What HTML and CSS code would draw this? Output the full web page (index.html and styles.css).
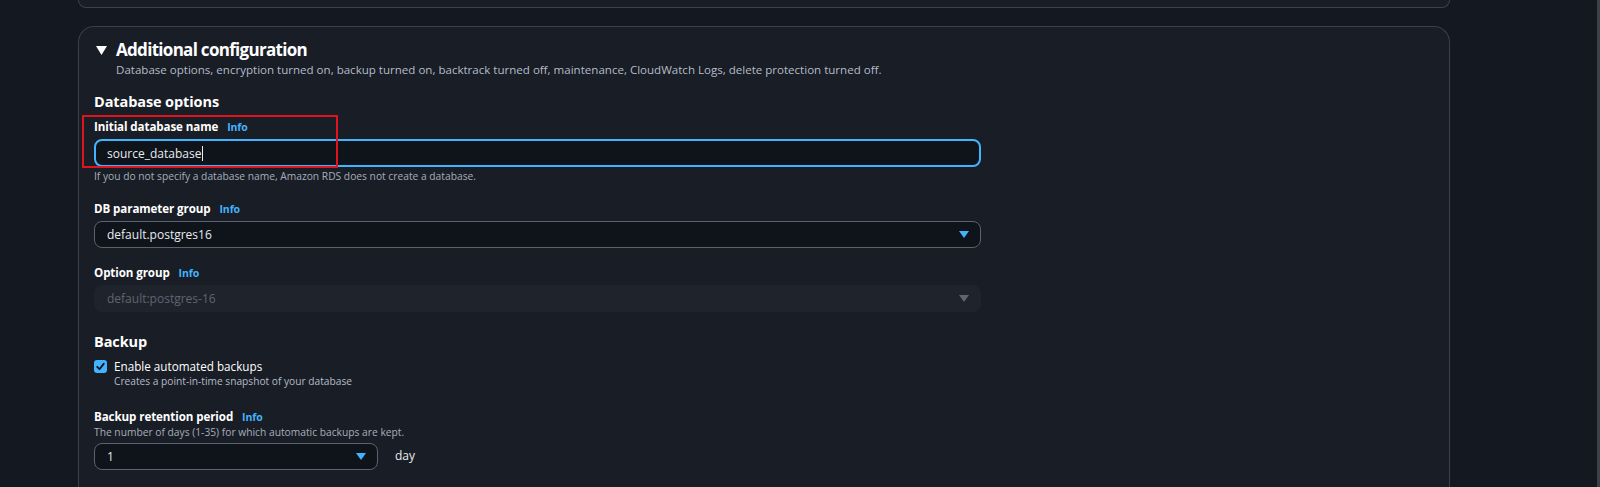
FILE: index.html
```html
<!DOCTYPE html>
<html lang="en">
<head>
<meta charset="utf-8">
<title>Additional configuration</title>
<link rel="stylesheet" href="styles.css">
</head>
<body>
<div class="page">
  <main class="content">
    <div class="card card-prev"></div>
    <section class="card">
      <div class="expander">
        <svg class="caret" width="11" height="9" viewBox="0 0 11 9"><path d="M0 0 H11 L5.5 9 Z" fill="#ffffff"/></svg>
        <div>
          <h2 class="exp-title">Additional configuration</h2>
          <p class="exp-desc">Database options, encryption turned on, backup turned on, backtrack turned off, maintenance, CloudWatch Logs, delete protection turned off.</p>
        </div>
      </div>

      <h3 class="section-title">Database options</h3>

      <div class="field field-first">
        <div class="highlight"></div>
        <label class="label">Initial database name <span class="info">Info</span></label>
        <div class="input input-focus"><span class="value">source_database</span><span class="cursor"></span></div>
        <p class="hint">If you do not specify a database name, Amazon RDS does not create a database.</p>
      </div>

      <div class="field">
        <label class="label">DB parameter group <span class="info">Info</span></label>
        <div class="input select"><span class="value">default.postgres16</span>
          <svg class="arrow" width="10" height="7" viewBox="0 0 10 7"><path d="M0 0 H10 L5 7 Z" fill="#42b4ff"/></svg>
        </div>
      </div>

      <div class="field field-third">
        <label class="label">Option group <span class="info">Info</span></label>
        <div class="input select disabled"><span class="value">default:postgres-16</span>
          <svg class="arrow" width="10" height="7" viewBox="0 0 10 7"><path d="M0 0 H10 L5 7 Z" fill="#5f6570"/></svg>
        </div>
      </div>

      <h3 class="section-title backup-title">Backup</h3>

      <div class="checkbox-row">
        <span class="checkbox">
          <svg width="13" height="13" viewBox="0 0 13 13"><path d="M3.2 6.8 L5.5 9.2 L9.8 3.6" fill="none" stroke="#0f141a" stroke-width="1.8" stroke-linecap="round" stroke-linejoin="round"/></svg>
        </span>
        <div>
          <div class="cb-label">Enable automated backups</div>
          <div class="cb-desc">Creates a point-in-time snapshot of your database</div>
        </div>
      </div>

      <div class="field retention">
        <label class="label">Backup retention period <span class="info">Info</span></label>
        <p class="desc">The number of days (1-35) for which automatic backups are kept.</p>
        <div class="row">
          <div class="input select small"><span class="value">1</span>
            <svg class="arrow" width="10" height="7" viewBox="0 0 10 7"><path d="M0 0 H10 L5 7 Z" fill="#42b4ff"/></svg>
          </div>
          <span class="unit">day</span>
        </div>
      </div>
    </section>
  </main>
  <div class="scrollbar"></div>
</div>
</body>
</html>
```

FILE: styles.css
```css
* { box-sizing: border-box; }
html, body {
  margin: 0;
  padding: 0;
  height: 487px;
  overflow: hidden;
  background: #141820;
  font-family: "Open Sans", "Noto Sans", sans-serif;
  color: #d1d5db;
}
.page {
  display: flex;
  height: 487px;
}
.content {
  flex: 1;
  padding-left: 78px;
}
.scrollbar {
  width: 3px;
  background: #3d4046;
}
.card {
  width: 1372px;
  background: #191d26;
  border: 1px solid #3b404b;
  border-radius: 16px;
}
.card-prev {
  height: 8px;
  border-top: none;
  border-radius: 0 0 16px 16px;
}
section.card {
  margin-top: 18px;
  padding: 13px 15px 0;
  height: 461px;
  overflow: hidden;
  border-bottom: none;
  border-radius: 16px 16px 0 0;
}
.expander {
  display: flex;
  align-items: flex-start;
  gap: 9px;
  padding-left: 2px;
}
.caret { margin-top: 6px; }
.exp-title {
  margin: 0;
  font-size: 17px;
  line-height: 20px;
  font-weight: 700;
  color: #ffffff;
  letter-spacing: -0.7px;
}
.exp-desc {
  margin: 2px 0 0;
  font-size: 11.55px;
  line-height: 16px;
  color: #b4bcc7;
}
.section-title {
  margin: 15px 0 0;
  font-size: 14.5px;
  line-height: 18px;
  font-weight: 700;
  color: #ffffff;
  letter-spacing: -0.1px;
}
.field { position: relative; margin-top: 18px; }
.field-first { margin-top: 8px; }
.field-third { margin-top: 17px; }
.highlight {
  position: absolute;
  left: -12px;
  top: -4px;
  width: 256px;
  height: 53px;
  border: 2px solid #e0141e;
  pointer-events: none;
  z-index: 2;
}
.label {
  display: block;
  font-size: 11.6px;
  line-height: 16px;
  font-weight: 700;
  color: #ffffff;
  letter-spacing: -0.1px;
}
.info {
  margin-left: 6px;
  font-size: 10.5px;
  font-weight: 700;
  color: #42b4ff;
}
.input {
  display: flex;
  align-items: center;
  width: 887px;
  height: 27px;
  margin-top: 4px;
  padding: 0 11px 0 12px;
  border: 1px solid #5b6270;
  border-radius: 8px;
  background: #0f131a;
  font-size: 12px;
  color: #e8ebef;
}
.input-focus {
  border: 2px solid #42b4ff;
  padding-left: 11px;
  height: 28px;
}
.value { white-space: nowrap; }
.cursor {
  width: 1px;
  height: 15px;
  margin-left: 1px;
  background: #e8ebef;
}
.select { justify-content: space-between; }
.disabled {
  border-color: #1f232c;
  background: #1f232c;
  color: #5f6570;
}
.hint, .desc {
  margin: 2px 0 0;
  font-size: 10.25px;
  line-height: 14px;
  color: #a6aeb9;
}
.backup-title { margin-top: 21px; }
.checkbox-row {
  display: flex;
  align-items: flex-start;
  gap: 7px;
  margin-top: 8px;
}
.checkbox {
  width: 13px;
  height: 13px;
  margin-top: 1px;
  border-radius: 3px;
  background: #42b4ff;
  display: flex;
}
.cb-label {
  font-size: 11.7px;
  line-height: 15px;
  color: #ffffff;
}
.cb-desc {
  font-size: 10.2px;
  line-height: 15px;
  color: #b4bcc7;
}
.retention { margin-top: 20px; }
.retention .desc { margin-top: 0; }
.row {
  display: flex;
  align-items: center;
  gap: 17px;
}
.row .input { margin-top: 4px; }
.small { width: 284px; }
.unit {
  font-size: 12px;
  color: #e8ebef;
  margin-top: 1px;
}
```
